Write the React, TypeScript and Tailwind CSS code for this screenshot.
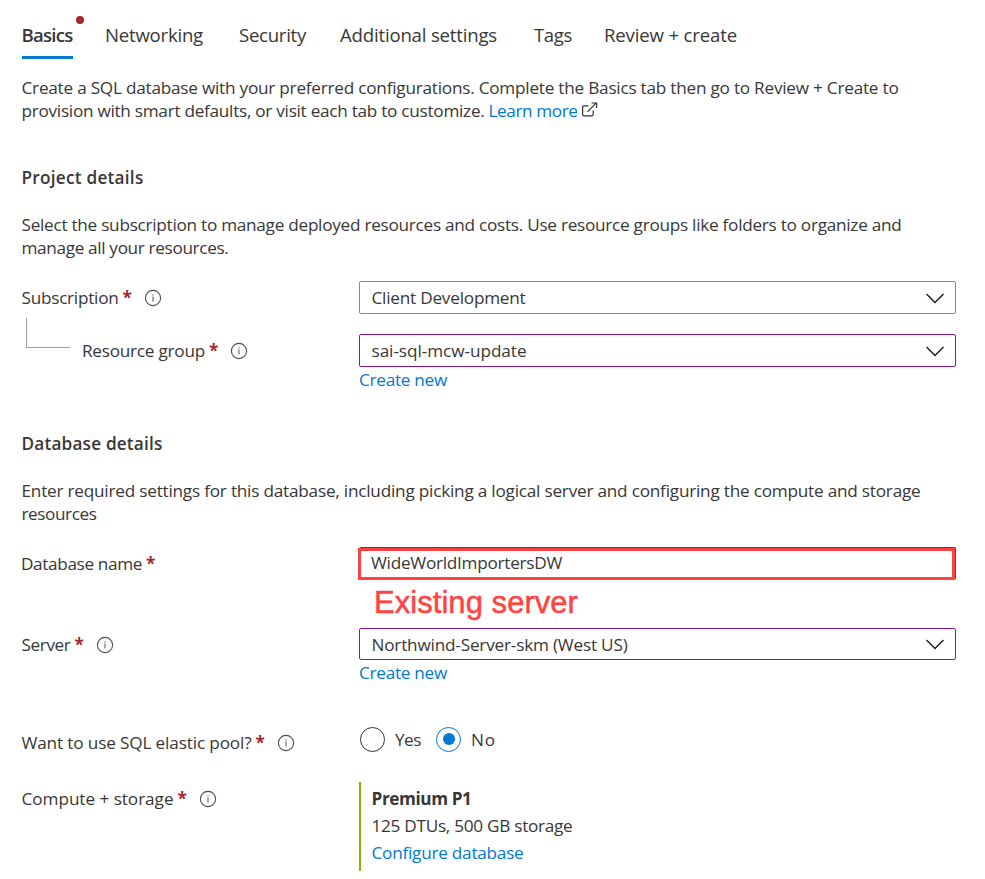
import { useLayoutEffect, useRef } from "react";
import type { ReactNode } from "react";

/** Single line of text whose tracking is adjusted so that it spans `w` pixels. */
function Fit({ w, className = "", children }: { w: number; className?: string; children: string }) {
  const ref = useRef<HTMLSpanElement>(null);
  useLayoutEffect(() => {
    const el = ref.current;
    if (!el) return;
    const apply = () => {
      el.style.letterSpacing = "0px";
      const natural = el.getBoundingClientRect().width;
      el.style.letterSpacing = `${(w - natural) / children.length}px`;
    };
    apply();
    document.fonts.ready.then(apply);
  }, [w, children]);
  return (
    <span ref={ref} className={`inline-block shrink-0 whitespace-pre ${className}`}>
      {children}
    </span>
  );
}

function Info({ className = "" }: { className?: string }) {
  return (
    <svg className={`size-[18px] shrink-0 ${className}`} viewBox="0 0 18 18" fill="none">
      <circle cx="9" cy="9" r="7.6" stroke="#504f4e" strokeWidth="1.1" />
      <path d="M9 7.6V12.4" stroke="#605e5c" strokeWidth="1.1" />
      <path d="M9 5.2V6.4" stroke="#605e5c" strokeWidth="1.1" />
    </svg>
  );
}

function Star() {
  return <span className="ml-1 w-[9px] shrink-0 text-[17.2px] font-bold text-[#a4262c]">*</span>;
}

function Chevron() {
  return (
    <svg className="mt-px mr-[11px] h-[11px] w-[18px] shrink-0" viewBox="0 0 18 11" fill="none">
      <path d="M0.5 1L9 9.5L17.5 1" stroke="#1b1a19" strokeWidth="1.4" />
    </svg>
  );
}

function Select({ border, w, value }: { border: string; w: number; value: string }) {
  return (
    <div className={`flex w-[597px] items-center justify-between rounded-[2px] border pl-[11.5px] ${border}`}>
      <Fit w={w}>{value}</Fit>
      <Chevron />
    </div>
  );
}

function Label({ w, text, info = true, className = "" }: { w: number; text: string; info?: boolean; className?: string }) {
  return (
    <div className={`flex items-center ${className}`}>
      <Fit w={w}>{text}</Fit>
      <Star />
      {info && <Info className="mt-px ml-3" />}
    </div>
  );
}

function Row({ label, className = "", children }: { label: ReactNode; className?: string; children: ReactNode }) {
  return (
    <div className={`flex ${className}`}>
      <div className="w-[338px] shrink-0">{label}</div>
      {children}
    </div>
  );
}

const tabs: [string, number, string][] = [
  ["Networking", 98, "ml-[32px]"],
  ["Security", 67, "ml-[36px]"],
  ["Additional settings", 157, "ml-[34px]"],
  ["Tags", 38, "ml-[37px]"],
  ["Review + create", 133, "ml-[32px]"],
];

export default function App() {
  return (
    <main className="h-[879px] w-[985px] overflow-hidden bg-white pl-[21px] font-['Open_Sans','Noto_Sans',sans-serif] text-[17.2px] leading-[23px] font-[380] text-[#383736]">
      <nav className="flex h-[59px] pt-[23px] text-[18.6px]">
        <div className="relative ml-px h-[36px] w-[51px] border-b-[3px] border-[#0078d4]">
          <Fit w={51} className="-ml-[0.5px] font-semibold">Basics</Fit>
          <span className="absolute -top-[7px] left-[54px] size-2 rounded-full bg-[#a4262c]" />
        </div>
        {tabs.map(([name, w, gap]) => (
          <Fit key={name} w={w} className={gap}>{name}</Fit>
        ))}
      </nav>

      <div className="mt-[17px] pl-[0.5px]">
        <Fit w={877}>Create a SQL database with your preferred configurations. Complete the Basics tab then go to Review + Create to</Fit>
        <div className="flex">
          <Fit w={463}>provision with smart defaults, or visit each tab to customize.</Fit>
          <Fit w={89} className="ml-[4px] text-[#0078d4]">Learn more</Fit>
          <svg className="mt-[3px] ml-[3px] size-[17px]" viewBox="0 0 17 17" fill="none" stroke="#323130" strokeWidth="1.2">
            <path d="M7.5 3.8H2.8Q1.6 3.8 1.6 5V12.6Q1.6 13.8 2.8 13.8H11Q12.2 13.8 12.2 12.6V8.6" />
            <path d="M6.5 9.8L15 1.2M10.6 1H15.6V6" />
          </svg>
        </div>
      </div>

      <h2 className="mt-[44px] pl-[0.5px] font-semibold">
        <Fit w={122}>Project details</Fit>
      </h2>
      <div className="mt-[24px] flex flex-col items-start pl-[0.5px]">
        <Fit w={880}>Select the subscription to manage deployed resources and costs. Use resource groups like folders to organize and</Fit>
        <Fit w={207}>manage all your resources.</Fit>
      </div>

      <Row className="mt-[22px] h-[33px]" label={<Label w={97} text="Subscription" className="h-[33px] pl-[0.5px]" />}>
        <Select border="border-[#8a8886]" w={154} value="Client Development" />
      </Row>
      <Row
        className="mt-[20px] h-[33px]"
        label={
          <div className="flex h-[33px]">
            <div className="-mt-[16px] ml-[5px] h-[30px] w-[44px] shrink-0 border-b border-l border-[#a19f9d]" />
            <Label w={123} text="Resource group" className="ml-[12px]" />
          </div>
        }
      >
        <Select border="border-[#881798]" w={155} value="sai-sql-mcw-update" />
      </Row>
      <div className="mt-[1px] pl-[338px] text-[#0078d4]">
        <Fit w={88}>Create new</Fit>
      </div>

      <h2 className="mt-[41px] pl-[0.5px] font-semibold">
        <Fit w={141}>Database details</Fit>
      </h2>
      <div className="mt-[24px] flex flex-col items-start pl-[0.5px]">
        <Fit w={899}>Enter required settings for this database, including picking a logical server and configuring the compute and storage</Fit>
        <Fit w={75}>resources</Fit>
      </div>

      <Row className="mt-[22px] h-[33px]" label={<Label w={121} text="Database name" info={false} className="h-[33px]" />}>
        <div className="relative w-[597px] rounded-[2px] border border-[#a4262c] border-b-transparent">
          <div className="absolute -top-px -left-[2px] mt-px flex h-[32px] w-[597px] items-center border-3 border-[#ff4343] bg-white pl-[10px]">
            <Fit w={191} className="-mt-[3px]">WideWorldImportersDW</Fit>
          </div>
        </div>
      </Row>
      <div className="h-[48px] pt-[5px] pl-[353px] font-['Liberation_Sans',Arial,sans-serif] text-[31px] leading-[36px] font-normal text-[#ff4343] [-webkit-text-stroke:0.5px_#ff4343]">
        <Fit w={204}>Existing server</Fit>
      </div>
      <Row className="h-[32px]" label={<Label w={49} text="Server" className="h-[33px] pl-[0.5px]" />}>
        <Select border="border-[#881798]" w={256} value="Northwind-Server-skm (West US)" />
      </Row>
      <div className="mt-[1px] pl-[338px] text-[#0078d4]">
        <Fit w={88}>Create new</Fit>
      </div>

      <Row className="mt-[42px] h-[27px]" label={<Label w={230} text="Want to use SQL elastic pool?" className="pt-[5px] pl-[0.5px]" />}>
        <div className="flex h-[26px] items-center pl-[1px]">
          <span className="size-[25px] rounded-full border border-[#323130]" />
          <Fit w={26} className="ml-[10px]">Yes</Fit>
          <span className="ml-[15px] flex size-[25px] items-center justify-center rounded-full border border-[#0078d4]">
            <span className="-mt-px size-[12px] rounded-full bg-[#0078d4]" />
          </span>
          <Fit w={25} className="ml-[10px]">No</Fit>
        </div>
      </Row>

      <Row className="mt-[29px]" label={<Label w={152} text="Compute + storage" className="mt-[5px] pl-[0.5px]" />}>
        <div className="flex h-[89px] flex-col items-start border-l-2 border-[#7fba00] pt-[3px] pl-[10.5px] leading-[27px]">
          <Fit w={100} className="font-bold">Premium P1</Fit>
          <Fit w={201}>125 DTUs, 500 GB storage</Fit>
          <Fit w={152} className="text-[#0078d4]">Configure database</Fit>
        </div>
      </Row>
    </main>
  );
}
